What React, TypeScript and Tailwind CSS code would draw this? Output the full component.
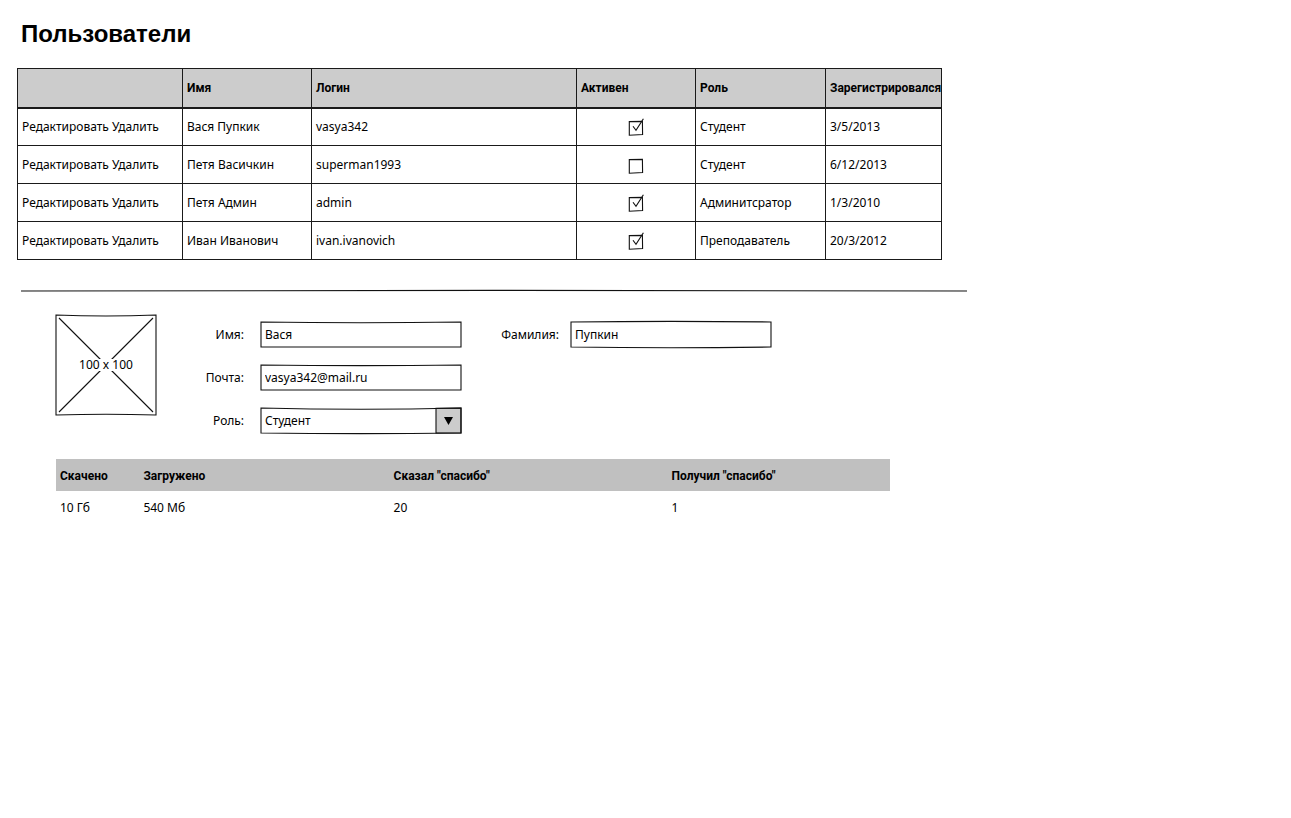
import { useState } from 'react';
import type { ReactNode } from 'react';

type User = {
  name: string;
  login: string;
  active: boolean;
  role: string;
  registered: string;
};

const users: User[] = [
  { name: 'Вася Пупкик', login: 'vasya342', active: true, role: 'Студент', registered: '3/5/2013' },
  { name: 'Петя Васичкин', login: 'superman1993', active: false, role: 'Студент', registered: '6/12/2013' },
  { name: 'Петя Админ', login: 'admin', active: true, role: 'Админитсратор', registered: '1/3/2010' },
  { name: 'Иван Иванович', login: 'ivan.ivanovich', active: true, role: 'Преподаватель', registered: '20/3/2012' },
];

const stats = [
  { title: 'Скачено', value: '10 Гб' },
  { title: 'Загружено', value: '540 Мб' },
  { title: 'Сказал "спасибо"', value: '20' },
  { title: 'Получил "спасибо"', value: '1' },
];

function SketchCheckbox({ label, initial }: { label: string; initial: boolean }) {
  const [checked, setChecked] = useState(initial);
  return (
    <span className="inline-grid h-5 w-5 align-middle">
      <input
        type="checkbox"
        aria-label={label}
        checked={checked}
        onChange={(e) => setChecked(e.target.checked)}
        className="col-start-1 row-start-1 h-5 w-5 appearance-none"
      />
      <svg viewBox="0 0 20 20" fill="none" stroke="#111" strokeWidth="1.1" aria-hidden="true" className="pointer-events-none col-start-1 row-start-1 h-5 w-5">
        <path d="M3.3 4.6 L16.4 4.4 L16.6 17.5 L3.3 18.2 Z" />
        {checked && <path d="M7 9.3 L10 13.4 L17.4 1.8" />}
      </svg>
    </span>
  );
}

function Frame({ top, bottom, arrow, children }: { top: number; bottom: number; arrow?: boolean; children: ReactNode }) {
  return (
    <div className="grid h-[27px] w-full max-w-[202px]">
      <svg viewBox="0 0 202 27" preserveAspectRatio="none" fill="none" stroke="#111" strokeWidth="1.1" aria-hidden="true" className="col-start-1 row-start-1 h-[27px] w-full overflow-visible">
        {arrow && <path d="M176 1.3 L201 1 V26 H176 Z" fill="#cccccc" />}
        <path d={`M1 1 Q101 ${1 + top * 2} 201 1 V26 Q101 ${26 + bottom * 2} 1 26 Z`} />
        {arrow && <path d="M184 10 H193 L188.5 18 Z" fill="#000" stroke="none" />}
      </svg>
      {children}
    </div>
  );
}

const control = 'col-start-1 row-start-1 h-[27px] w-full min-w-0 appearance-none bg-transparent px-[5px] text-xs outline-none';

export default function App() {
  return (
    <main className="min-h-screen bg-white px-[17px] pt-[18px] font-['Noto_Sans','Open_Sans',sans-serif] text-xs text-black">
      <h1 className="pl-1 font-['Liberation_Sans',Arial,sans-serif] text-2xl leading-8 font-bold">Пользователи</h1>

      <table className="mt-[18px] w-full max-w-[925px] table-fixed border-collapse text-left">
        <colgroup>
          <col className="w-[165px]" />
          <col className="w-[129px]" />
          <col />
          <col className="w-[119px]" />
          <col className="w-[130px]" />
          <col className="w-[116px]" />
        </colgroup>
        <thead>
          <tr className="h-[39px] border border-b-2 border-[#1a1a1a] bg-[#cccccc]">
            <td className="border-x border-[#1a1a1a]" />
            {['Имя', 'Логин', 'Активен', 'Роль', 'Зарегистрировался'].map((title) => (
              <th key={title} scope="col" className="border-x border-[#1a1a1a] pl-1 font-[Roboto,'Noto_Sans',sans-serif] font-bold whitespace-nowrap">
                {title}
              </th>
            ))}
          </tr>
        </thead>
        <tbody>
          {users.map((user) => (
            <tr key={user.login} className="h-[38px] border border-[#1a1a1a]">
              <td className="border-x border-[#1a1a1a] pl-1 whitespace-nowrap">
                <a href="#edit">Редактировать</a> <a href="#delete">Удалить</a>
              </td>
              <td className="border-x border-[#1a1a1a] pl-1">{user.name}</td>
              <td className="border-x border-[#1a1a1a] pl-1">{user.login}</td>
              <td className="border-x border-[#1a1a1a] text-center">
                <SketchCheckbox label={`Активен: ${user.name}`} initial={user.active} />
              </td>
              <td className="border-x border-[#1a1a1a] pl-1">{user.role}</td>
              <td className="border-x border-[#1a1a1a] pl-1">{user.registered}</td>
            </tr>
          ))}
        </tbody>
      </table>

      <svg viewBox="0 0 946 3" preserveAspectRatio="none" fill="none" stroke="#111" strokeWidth="1.1" role="separator" className="mt-[29px] ml-1 block h-[3px] w-full max-w-[946px]">
        <path d="M0 2 Q473 0.8 946 2" />
      </svg>

      <section className="mt-[22px] ml-[38px] flex items-start">
        <div className="grid h-[102px] w-[102px] shrink-0 place-items-center">
          <svg viewBox="0 0 102 102" fill="none" stroke="#111" strokeWidth="1.1" aria-hidden="true" className="col-start-1 row-start-1 h-full w-full">
            <path d="M1 1 Q51 3 101 1 V101 Q51 99.5 1 101 Z" />
            <path d="M4 4 L98 98 M98 4 L4 98" />
          </svg>
          <span className="col-start-1 row-start-1 bg-white leading-3">100 x 100</span>
        </div>

        <form className="mt-[7px] flex flex-1 items-start" onSubmit={(e) => e.preventDefault()}>
          <div className="grid w-full max-w-[305px] grid-cols-[87px_1fr] items-center gap-x-4 gap-y-4">
            <label htmlFor="first-name" className="text-right">Имя:</label>
            <Frame top={0.8} bottom={0}>
              <input id="first-name" type="text" defaultValue="Вася" className={control} />
            </Frame>
            <label htmlFor="email" className="text-right">Почта:</label>
            <Frame top={0.6} bottom={0}>
              <input id="email" type="email" defaultValue="vasya342@mail.ru" className={control} />
            </Frame>
            <label htmlFor="role" className="text-right">Роль:</label>
            <Frame top={1.2} bottom={0.6} arrow>
              <select id="role" defaultValue="Студент" className={control}>
                <option>Студент</option>
                <option>Преподаватель</option>
                <option>Админитсратор</option>
              </select>
            </Frame>
          </div>
          <div className="grid w-full max-w-[310px] grid-cols-[97px_1fr] items-center gap-x-[11px]">
            <label htmlFor="last-name" className="text-right">Фамилия:</label>
            <Frame top={-0.6} bottom={0.8}>
              <input id="last-name" type="text" defaultValue="Пупкин" className={control} />
            </Frame>
          </div>
        </form>
      </section>

      <table className="mt-[25px] ml-[39px] w-[calc(100%-39px)] max-w-[834px] table-fixed text-left">
        <colgroup>
          <col className="w-[10%]" />
          <col className="w-[30%]" />
          <col className="w-1/3" />
          <col />
        </colgroup>
        <thead>
          <tr className="h-8 bg-[#c0c0c0]">
            {stats.map((stat) => (
              <th key={stat.title} scope="col" className="pt-0.5 pl-1 font-[Roboto,'Noto_Sans',sans-serif] font-bold whitespace-nowrap">{stat.title}</th>
            ))}
          </tr>
        </thead>
        <tbody>
          <tr className="h-8">
            {stats.map((stat) => (
              <td key={stat.title} className="pt-0.5 pl-1">{stat.value}</td>
            ))}
          </tr>
        </tbody>
      </table>
    </main>
  );
}
